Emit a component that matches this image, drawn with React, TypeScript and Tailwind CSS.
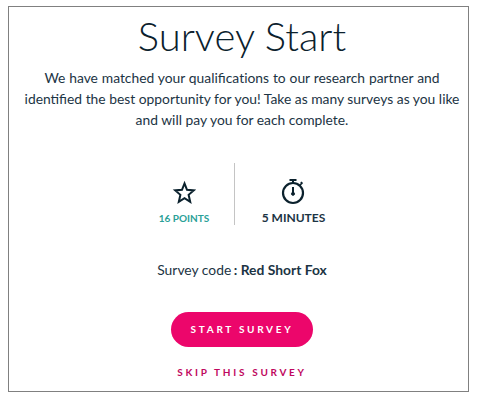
import type { ReactNode } from 'react';

function StarIcon() {
  return (
    <svg width="24" height="25" viewBox="0 0 24 25" fill="none" stroke="#0b212d" strokeWidth="2">
      <path d="M12.5 3.4 L15 9.8 L21.8 10.4 L16.6 14.8 L18.2 21.9 L12.5 18.2 L6.8 21.9 L8.4 14.8 L3.2 10.4 L10 9.8 Z" />
    </svg>
  );
}

function StopwatchIcon() {
  return (
    <svg width="24" height="28" viewBox="0 0 24 28" fill="none" stroke="#0b212d">
      <circle cx="12" cy="16" r="10" strokeWidth="2.2" />
      <path d="M8.5 3h7M12 3v4" strokeWidth="2" />
      <path d="M18.5 8.8l2.8-3.2M19.8 5l1.8 1.6" strokeWidth="1.6" />
      <path d="M12 10v7" strokeWidth="2" />
      <circle cx="12" cy="16.8" r="1.5" fill="#0b212d" />
    </svg>
  );
}

function Stat({ icon, label, className }: { icon: ReactNode; label: string; className: string }) {
  return (
    <div className="flex flex-col items-center">
      <div className="flex h-[28px] items-end">{icon}</div>
      <p className={`whitespace-nowrap font-bold ${className}`}>{label}</p>
    </div>
  );
}

export default function App() {
  return (
    <main className="h-[402px] w-[478px] bg-white pt-[6px] pl-[8px] font-['Lato',sans-serif] text-[#1c3444]">
      <section className="flex h-[386px] w-[461px] flex-col items-center border border-[#808080] pl-[7px] text-center">
        <h1 className="mt-[4px] text-[40px] leading-[50px] font-light text-[#0b212d]">Survey Start</h1>
        <p className="mt-[6px] text-[13.85px] leading-[21px] whitespace-nowrap">
          <span className="[word-spacing:0.3px]">
            We have matched your qualifica<span className="[font-variant-ligatures:none]">tions</span> to our research partner and
          </span>
          <br />
          identified the best opportunity for you! Take as many surveys as you like
          <br />
          and will pay you for each complete.
        </p>
        <div className="mt-[33px] grid h-[62px] w-[217px] grid-cols-[100px_1px_116px] grid-rows-[62px]">
          <div className="pt-[14px]">
            <Stat icon={<StarIcon />} label="16 POINTS" className="pl-px text-[10px] leading-[26px] text-[#2aa198]" />
          </div>
          <div className="bg-[#c4c4c4]" />
          <div className="pt-[14px]">
            <Stat icon={<StopwatchIcon />} label="5 MINUTES" className="pl-[2px] text-[12px] leading-[25px]" />
          </div>
        </div>
        <p className="mt-[35px] text-[13.85px] leading-[20px]">
          Survey code <strong className="-ml-px font-bold">: Red Short Fox</strong>
        </p>
        <button className="mt-[32px] h-[35px] w-[142px] rounded-full bg-[#ec066b] text-[10px] font-bold tracking-[2.7px] text-white">
          START SURVEY
        </button>
        <button className="mt-[18px] text-[10px] leading-[15px] font-bold tracking-[2.7px] text-[#c00860]">
          SKIP THIS SURVEY
        </button>
      </section>
    </main>
  );
}
